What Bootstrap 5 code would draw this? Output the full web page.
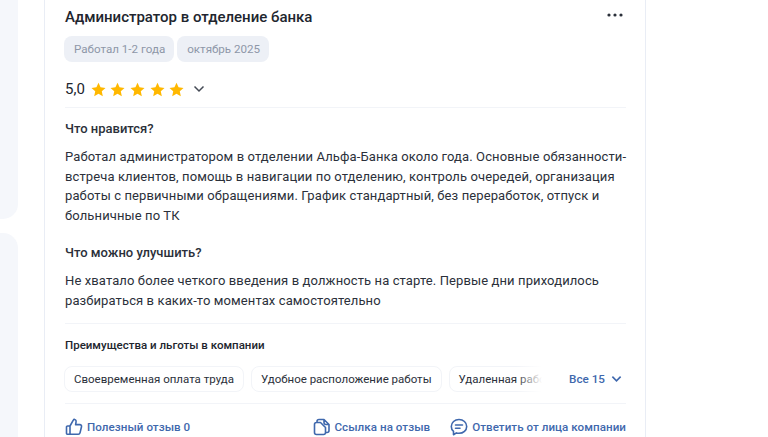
<!DOCTYPE html>
<html lang="ru">
<head>
<meta charset="utf-8">
<title>Отзыв</title>
<link href="https://cdn.jsdelivr.net/npm/bootstrap@5.3.0/dist/css/bootstrap.min.css" rel="stylesheet">
<style>
html,body{height:437px;overflow:hidden;background:#fff}
body{font-family:Roboto,"Liberation Sans",sans-serif;color:#21252e}
.shell{height:437px;width:768px;overflow:hidden}
.rail{width:18px;flex:none;gap:14px}
.rail-top{height:219px;background:#f5f7fb;border-bottom-right-radius:15px}
.rail-bottom{flex:1;background:#f5f7fb;border-top-right-radius:15px}
.review{width:602px;margin-left:26px;flex:none;height:460px;border-left:1px solid #e9edf5;border-right:1px solid #e9edf5;padding:0 19px 0 20px;background:#fff}
.rv-title{font-size:15px;line-height:20px;font-weight:500;padding-top:7px;color:#21252e}
.menu-dots{width:16px;height:4px;margin-top:13px;flex:none;margin-right:3px}
.tag-row{gap:3px;margin-top:9px;margin-left:-1px}
.tag-chip{background:#edf0f6;color:#8d97a8;font-size:11.6px;line-height:16px;padding:5px 9px 5px 10px;border-radius:8px;height:26px}
.rate-row{margin-top:15px;height:24px}
.rate-num{font-size:15px;line-height:24px;margin-right:6px;color:#21252e}
.rate-star{width:15px;height:15px;margin-right:4.600px}
.rate-caret{margin-left:4.500px;width:12px;height:8px}
.rule{height:1px;background:#f2f4f8;margin:0}
.rv-head{font-size:13px;line-height:20px;font-weight:500;color:#2b303a}
.rv-text{font-size:13px;line-height:19.6px;color:#2b303a;letter-spacing:.11px;margin:0;white-space:nowrap}
.rule-a{margin-top:6px}
.h-a{margin-top:11px}
.t-a{margin-top:8px}
.h-b{margin-top:18px}
.t-b{margin-top:8px}
.perk-title{font-size:11.500px;line-height:16px;font-weight:500;color:#21252e;margin-top:13px}
.perk-row{margin-top:13px;height:26px}
.perk-clip{width:478px;overflow:hidden;flex:none;gap:7px;position:relative;margin-left:-1px}
.perk-clip::after{content:"";position:absolute;right:0;top:0;bottom:0;width:26px;background:linear-gradient(90deg,rgba(255,255,255,0),#fff)}
.perk-chip{flex:none;border:1px solid #f2f4f8;border-radius:8px;font-size:11.500px;line-height:16px;padding:4px 9px;height:26px;color:#2b303a;white-space:nowrap}
.more-link{font-size:11.700px;line-height:16px;color:#3f68ad;font-weight:500;margin-left:27px;white-space:nowrap}
.more-caret{margin-left:6px}
.act{font-size:11.600px;line-height:16px;font-weight:500;color:#3f68ad;white-space:nowrap;letter-spacing:.05px}
.act svg{flex:none;margin-right:4px}
.act-gap{margin-right:20px}
.act-row{margin-top:14px}
.rule-b{margin-top:12px}
.rule-c{margin-top:11px}
</style>
</head>
<body>
<div class="shell d-flex">
  <div class="rail d-flex flex-column">
    <div class="rail-top"></div>
    <div class="rail-bottom"></div>
  </div>
  <main class="review">
    <div class="d-flex justify-content-between">
      <div class="rv-title">Администратор в отделение банка</div>
      <svg class="menu-dots" viewBox="0 0 16 4"><circle cx="2" cy="2" r="1.6" fill="#2b303a"/><circle cx="8" cy="2" r="1.6" fill="#2b303a"/><circle cx="14" cy="2" r="1.6" fill="#2b303a"/></svg>
    </div>
    <div class="d-flex tag-row">
      <span class="tag-chip">Работал 1-2 года</span>
      <span class="tag-chip">октябрь 2025</span>
    </div>
    <div class="d-flex align-items-center rate-row">
      <span class="rate-num">5,0</span>
      <svg class="rate-star" viewBox="0 0 16 16"><path fill="#ffb800" d="M8 .8l2.2 4.9 5.3.6-4 3.6 1.1 5.3L8 12.5l-4.6 2.7 1.1-5.3-4-3.6 5.3-.6z"/></svg>
      <svg class="rate-star" viewBox="0 0 16 16"><path fill="#ffb800" d="M8 .8l2.2 4.9 5.3.6-4 3.6 1.1 5.3L8 12.5l-4.6 2.7 1.1-5.3-4-3.6 5.3-.6z"/></svg>
      <svg class="rate-star" viewBox="0 0 16 16"><path fill="#ffb800" d="M8 .8l2.2 4.9 5.3.6-4 3.6 1.1 5.3L8 12.5l-4.6 2.7 1.1-5.3-4-3.6 5.3-.6z"/></svg>
      <svg class="rate-star" viewBox="0 0 16 16"><path fill="#ffb800" d="M8 .8l2.2 4.9 5.3.6-4 3.6 1.1 5.3L8 12.5l-4.6 2.7 1.1-5.3-4-3.6 5.3-.6z"/></svg>
      <svg class="rate-star" viewBox="0 0 16 16"><path fill="#ffb800" d="M8 .8l2.2 4.9 5.3.6-4 3.6 1.1 5.3L8 12.5l-4.6 2.7 1.1-5.3-4-3.6 5.3-.6z"/></svg>
      <svg class="rate-caret" viewBox="0 0 12 8"><path d="M1.5 1.5 6 6l4.5-4.5" fill="none" stroke="#444a55" stroke-width="1.5"/></svg>
    </div>
    <div class="rule rule-a"></div>
    <div class="rv-head h-a">Что нравится?</div>
    <p class="rv-text t-a">Работал администратором в отделении Альфа-Банка около года. Основные обязанности-<br>встреча клиентов, помощь в навигации по отделению, контроль очередей, организация<br>работы с первичными обращениями. График стандартный, без переработок, отпуск и<br>больничные по ТК</p>
    <div class="rv-head h-b">Что можно улучшить?</div>
    <p class="rv-text t-b">Не хватало более четкого введения в должность на старте. Первые дни приходилось<br>разбираться в каких-то моментах самостоятельно</p>
    <div class="rule rule-b"></div>
    <div class="perk-title">Преимущества и льготы в компании</div>
    <div class="d-flex align-items-center perk-row">
      <div class="d-flex perk-clip">
        <span class="perk-chip">Своевременная оплата труда</span>
        <span class="perk-chip">Удобное расположение работы</span>
        <span class="perk-chip">Удаленная работа</span>
      </div>
      <span class="more-link">Все 15</span>
      <svg class="more-caret" width="11" height="8" viewBox="0 0 12 8"><path d="M1.5 1.5 6 6l4.5-4.5" fill="none" stroke="#3f68ad" stroke-width="1.8"/></svg>
    </div>
    <div class="rule rule-c"></div>
    <div class="d-flex justify-content-between act-row">
      <div class="d-flex align-items-center act">
        <svg width="18" height="18" viewBox="0 0 18 18" fill="none" stroke="#3f68ad" stroke-width="1.6" stroke-linejoin="round"><path d="M5 8v8.300H2.600A1.100 1.100 0 0 1 1.500 15.200V9.100A1.100 1.100 0 0 1 2.600 8zM5 8l3.300-5.800c.3-.6.900-.9 1.500-.7 1 .3 1.500 1.200 1.300 2.200L10.600 6.600h4.300c1.100 0 1.900 1 1.600 2.100l-1.500 6.200c-.2.800-.9 1.400-1.700 1.400H5"/></svg>
        <span>Полезный отзыв 0</span>
      </div>
      <div class="d-flex">
        <div class="d-flex align-items-center act act-gap">
          <svg width="18" height="18" viewBox="0 0 18 18" fill="none" stroke="#3f68ad" stroke-width="1.6" stroke-linejoin="round"><path d="M6 1.500h5l5 5v6c0 1.100-.9 2-2 2h-1.500M11 1.500v3c0 1.100.9 2 2 2h3"/><path d="M6 1.500c-1.100 0-2 .9-2 2V4.500H3.500c-1.100 0-2 .9-2 2v8c0 1.100.9 2 2 2H10.500c1.100 0 2-.9 2-2v-5l-5-5H4.500"/></svg>
          <span>Ссылка на отзыв</span>
        </div>
        <div class="d-flex align-items-center act">
          <svg width="18" height="18" viewBox="0 0 18 18" fill="none" stroke="#3f68ad" stroke-width="1.6" stroke-linecap="round" stroke-linejoin="round"><path d="M9 1.500c4.300 0 7.700 3 7.700 6.900s-3.400 6.900-7.700 6.900c-.9 0-1.800-.1-2.600-.4L3.500 16.700v-3.400C2 12 1.300 10.300 1.300 8.400 1.300 4.500 4.700 1.500 9 1.500z"/><path d="M5.500 7h7M5.500 10.300h4.500"/></svg>
          <span>Ответить от лица компании</span>
        </div>
      </div>
    </div>
  </main>
</div>
</body>
</html>
